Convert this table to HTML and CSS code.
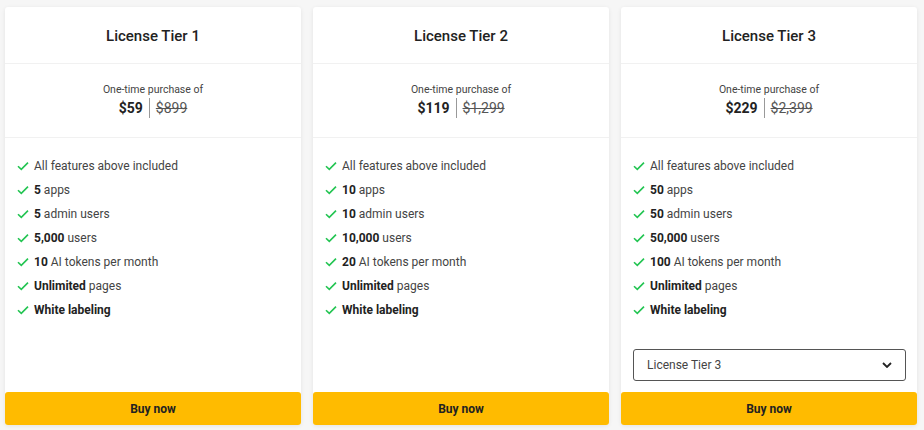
FILE: index.html
```html
<!DOCTYPE html>
<html>
<head>
<meta charset="utf-8">
<link rel="stylesheet" href="styles.css">
</head>
<body>
<div class="tiers">
  <div class="card">
    <div class="head">License Tier 1</div>
    <div class="price">
      <div class="once">One-time purchase of</div>
      <div class="amount"><b>$59</b><span class="sep"></span><s>$899</s></div>
    </div>
    <ul class="features">
      <li><svg class="chk" viewBox="0 0 12 10"><path d="M1 5.2 4.3 8.4 11 1.6"/></svg><span>All features above included</span></li>
      <li><svg class="chk" viewBox="0 0 12 10"><path d="M1 5.2 4.3 8.4 11 1.6"/></svg><span><b>5</b> apps</span></li>
      <li><svg class="chk" viewBox="0 0 12 10"><path d="M1 5.2 4.3 8.4 11 1.6"/></svg><span><b>5</b> admin users</span></li>
      <li><svg class="chk" viewBox="0 0 12 10"><path d="M1 5.2 4.3 8.4 11 1.6"/></svg><span><b>5,000</b> users</span></li>
      <li><svg class="chk" viewBox="0 0 12 10"><path d="M1 5.2 4.3 8.4 11 1.6"/></svg><span><b>10</b> AI tokens per month</span></li>
      <li><svg class="chk" viewBox="0 0 12 10"><path d="M1 5.2 4.3 8.4 11 1.6"/></svg><span><b>Unlimited</b> pages</span></li>
      <li><svg class="chk" viewBox="0 0 12 10"><path d="M1 5.2 4.3 8.4 11 1.6"/></svg><span><b>White labeling</b></span></li>
    </ul>
    <button class="buy">Buy now</button>
  </div>
  <div class="card">
    <div class="head">License Tier 2</div>
    <div class="price">
      <div class="once">One-time purchase of</div>
      <div class="amount"><b>$119</b><span class="sep"></span><s>$1,299</s></div>
    </div>
    <ul class="features">
      <li><svg class="chk" viewBox="0 0 12 10"><path d="M1 5.2 4.3 8.4 11 1.6"/></svg><span>All features above included</span></li>
      <li><svg class="chk" viewBox="0 0 12 10"><path d="M1 5.2 4.3 8.4 11 1.6"/></svg><span><b>10</b> apps</span></li>
      <li><svg class="chk" viewBox="0 0 12 10"><path d="M1 5.2 4.3 8.4 11 1.6"/></svg><span><b>10</b> admin users</span></li>
      <li><svg class="chk" viewBox="0 0 12 10"><path d="M1 5.2 4.3 8.4 11 1.6"/></svg><span><b>10,000</b> users</span></li>
      <li><svg class="chk" viewBox="0 0 12 10"><path d="M1 5.2 4.3 8.4 11 1.6"/></svg><span><b>20</b> AI tokens per month</span></li>
      <li><svg class="chk" viewBox="0 0 12 10"><path d="M1 5.2 4.3 8.4 11 1.6"/></svg><span><b>Unlimited</b> pages</span></li>
      <li><svg class="chk" viewBox="0 0 12 10"><path d="M1 5.2 4.3 8.4 11 1.6"/></svg><span><b>White labeling</b></span></li>
    </ul>
    <button class="buy">Buy now</button>
  </div>
  <div class="card">
    <div class="head">License Tier 3</div>
    <div class="price">
      <div class="once">One-time purchase of</div>
      <div class="amount"><b>$229</b><span class="sep"></span><s>$2,399</s></div>
    </div>
    <ul class="features">
      <li><svg class="chk" viewBox="0 0 12 10"><path d="M1 5.2 4.3 8.4 11 1.6"/></svg><span>All features above included</span></li>
      <li><svg class="chk" viewBox="0 0 12 10"><path d="M1 5.2 4.3 8.4 11 1.6"/></svg><span><b>50</b> apps</span></li>
      <li><svg class="chk" viewBox="0 0 12 10"><path d="M1 5.2 4.3 8.4 11 1.6"/></svg><span><b>50</b> admin users</span></li>
      <li><svg class="chk" viewBox="0 0 12 10"><path d="M1 5.2 4.3 8.4 11 1.6"/></svg><span><b>50,000</b> users</span></li>
      <li><svg class="chk" viewBox="0 0 12 10"><path d="M1 5.2 4.3 8.4 11 1.6"/></svg><span><b>100</b> AI tokens per month</span></li>
      <li><svg class="chk" viewBox="0 0 12 10"><path d="M1 5.2 4.3 8.4 11 1.6"/></svg><span><b>Unlimited</b> pages</span></li>
      <li><svg class="chk" viewBox="0 0 12 10"><path d="M1 5.2 4.3 8.4 11 1.6"/></svg><span><b>White labeling</b></span></li>
    </ul>
    <div class="select-wrap">
      <div class="select"><span>License Tier 3</span><svg class="chev" viewBox="0 0 10 6"><path d="M1 1 5 5 9 1"/></svg></div>
    </div>
    <button class="buy">Buy now</button>
  </div>
</div>
</body>
</html>
```
FILE: styles.css
```css
* { box-sizing: border-box; }
html, body { margin: 0; padding: 0; }
body {
  background: #f6f6f6;
  font-family: Roboto, "Liberation Sans", sans-serif;
  color: #333;
  width: 924px;
  height: 430px;
  overflow: hidden;
}
.tiers {
  display: grid;
  grid-template-columns: repeat(3, 296px);
  column-gap: 12px;
  padding: 7px 0 0 5px;
}
.card {
  background: #fff;
  height: 418px;
  border-radius: 3px;
  box-shadow: 0 1px 4px rgba(0,0,0,0.08);
  display: flex;
  flex-direction: column;
}
.head {
  height: 57px;
  display: flex;
  align-items: center;
  justify-content: center;
  font-size: 15px;
  font-weight: 500;
  color: #222;
  border-bottom: 1px solid #f1f1f1;
  padding-top: 2px;
}
.price {
  height: 74px;
  border-bottom: 1px solid #f1f1f1;
  display: flex;
  flex-direction: column;
  align-items: center;
  justify-content: center;
  padding-bottom: 2px;
}
.once {
  font-size: 10.5px;
  color: #444;
  line-height: 16px;
}
.amount {
  display: flex;
  align-items: center;
  font-size: 14px;
  line-height: 20px;
}
.amount b { font-weight: 700; color: #222; }
.amount s { color: #555; }
.sep {
  width: 1px;
  height: 20px;
  background: #999;
  margin: 0 6px 0 6px;
}
.features {
  list-style: none;
  margin: 0;
  padding: 16px 0 0 12px;
  flex: 1;
}
.features li {
  display: flex;
  align-items: center;
  height: 24px;
  font-size: 12px;
  color: #444;
}
.features b { font-weight: 700; color: #222; }
.chk {
  width: 12px;
  height: 10px;
  margin-right: 5px;
  fill: none;
  stroke: #23c552;
  stroke-width: 1.6;
}
.select-wrap {
  padding: 0 11px 11px 12px;
}
.select {
  height: 32px;
  border: 1px solid #555;
  border-radius: 3px;
  display: flex;
  align-items: center;
  justify-content: space-between;
  padding: 0 13px 0 13px;
  font-size: 12px;
  color: #444;
}
.chev {
  width: 10px;
  height: 6px;
  fill: none;
  stroke: #222;
  stroke-width: 1.8;
}
.buy {
  height: 33px;
  border: none;
  border-radius: 3px;
  background: #ffbb00;
  font-family: Roboto, "Liberation Sans", sans-serif;
  font-size: 12px;
  font-weight: 700;
  color: #222;
  cursor: pointer;
}
```
